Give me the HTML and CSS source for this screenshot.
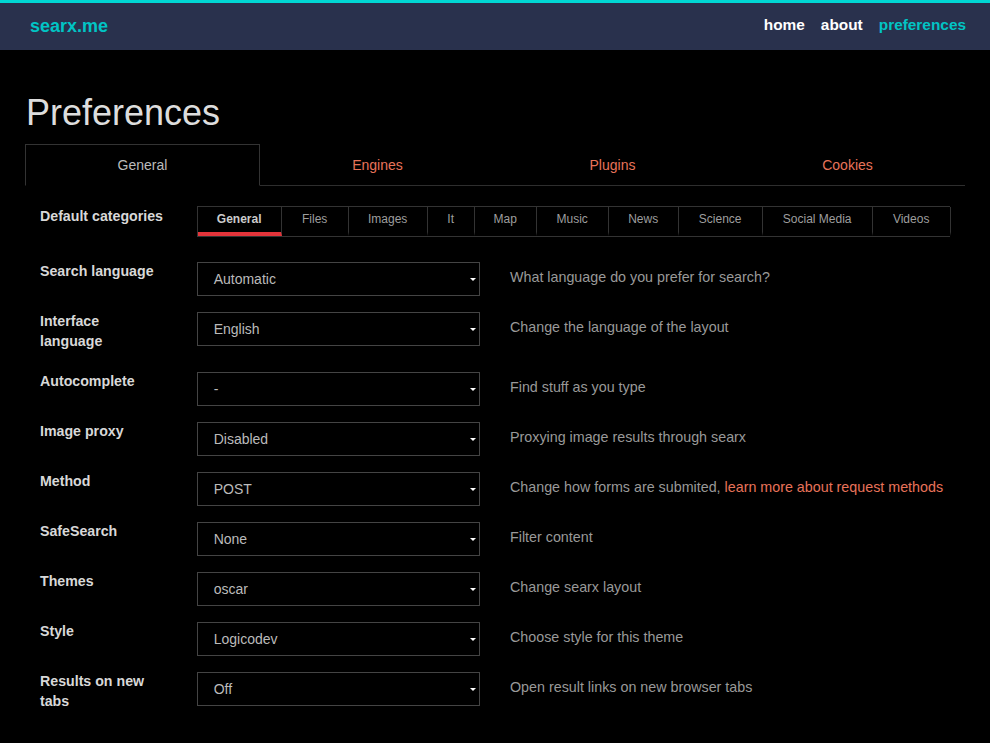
FILE: index.html
```html
<!DOCTYPE html>
<html lang="en">
<head>
<meta charset="utf-8">
<title>searx.me - preferences</title>
<link rel="stylesheet" href="styles.css">
</head>
<body>
<header class="navbar">
  <a class="brand" href="#">searx.me</a>
  <nav class="nav-links">
    <a href="#">home</a>
    <a href="#">about</a>
    <a class="current" href="#">preferences</a>
  </nav>
</header>

<main class="container">
  <h1 class="title">Preferences</h1>

  <ul class="tabs">
    <li class="tab active">General</li>
    <li class="tab">Engines</li>
    <li class="tab">Plugins</li>
    <li class="tab">Cookies</li>
  </ul>

  <div class="form">
    <div class="row row-cats">
      <div class="label">Default categories</div>
      <div class="cats">
        <span class="cat on">General</span>
        <span class="cat">Files</span>
        <span class="cat">Images</span>
        <span class="cat">It</span>
        <span class="cat">Map</span>
        <span class="cat">Music</span>
        <span class="cat">News</span>
        <span class="cat">Science</span>
        <span class="cat">Social Media</span>
        <span class="cat">Videos</span>
      </div>
    </div>

    <div class="row">
      <div class="label">Search language</div>
      <div class="select">Automatic<span class="caret"></span></div>
      <div class="help">What language do you prefer for search?</div>
    </div>

    <div class="row">
      <div class="label">Interface<br>language</div>
      <div class="select">English<span class="caret"></span></div>
      <div class="help">Change the language of the layout</div>
    </div>

    <div class="row">
      <div class="label">Autocomplete</div>
      <div class="select">-<span class="caret"></span></div>
      <div class="help">Find stuff as you type</div>
    </div>

    <div class="row">
      <div class="label">Image proxy</div>
      <div class="select">Disabled<span class="caret"></span></div>
      <div class="help">Proxying image results through searx</div>
    </div>

    <div class="row">
      <div class="label">Method</div>
      <div class="select">POST<span class="caret"></span></div>
      <div class="help">Change how forms are submited, <a href="#">learn more about request methods</a></div>
    </div>

    <div class="row">
      <div class="label">SafeSearch</div>
      <div class="select">None<span class="caret"></span></div>
      <div class="help">Filter content</div>
    </div>

    <div class="row">
      <div class="label">Themes</div>
      <div class="select">oscar<span class="caret"></span></div>
      <div class="help">Change searx layout</div>
    </div>

    <div class="row">
      <div class="label">Style</div>
      <div class="select">Logicodev<span class="caret"></span></div>
      <div class="help">Choose style for this theme</div>
    </div>

    <div class="row">
      <div class="label">Results on new<br>tabs</div>
      <div class="select">Off<span class="caret"></span></div>
      <div class="help">Open result links on new browser tabs</div>
    </div>
  </div>
</main>
</body>
</html>
```

FILE: styles.css
```css
* { box-sizing: border-box; }

html, body {
  margin: 0;
  padding: 0;
  background: #000;
  font-family: "Liberation Sans", Arial, sans-serif;
  font-size: 14px;
  line-height: 20px;
  color: #bbb;
}

a { text-decoration: none; }

.navbar {
  height: 50px;
  border-top: 3px solid #01d7d4;
  background: #29314d;
  display: flex;
  align-items: center;
  justify-content: space-between;
  padding: 0 24px 0 30px;
}

.brand {
  color: #01c4c4;
  font-weight: bold;
  font-size: 18px;
  margin-top: -2px;
}

.nav-links {
  display: flex;
  gap: 16px;
  margin-top: -3px;
}

.nav-links a {
  color: #fff;
  font-weight: bold;
  font-size: 15.4px;
}

.nav-links a.current { color: #01c4c4; }

.container {
  width: 940px;
  margin: 0 auto;
}

.title {
  margin: 43px 0 11px 1px;
  font-size: 36px;
  line-height: 40px;
  font-weight: normal;
  color: #ddd;
}

.tabs {
  list-style: none;
  margin: 0;
  padding: 0;
  display: grid;
  grid-template-columns: repeat(4, 1fr);
  border-bottom: 1px solid #2e2e2e;
}

.tab {
  height: 42px;
  margin-bottom: -1px;
  padding: 10px 15px;
  text-align: center;
  color: #e8735a;
  border: 1px solid transparent;
}

.tab.active {
  color: #bbb;
  border-color: #333;
  border-bottom-color: #000;
}

.form {
  padding-top: 19px;
  display: flex;
  flex-direction: column;
  gap: 14px;
}

.row {
  display: grid;
  grid-template-columns: 156.67px 313.33px 1fr;
  align-items: start;
}

.label {
  padding: 1px 15px 0;
  margin-bottom: 5px;
  font-weight: bold;
  font-size: 14.2px;
  color: #d8d8d8;
}

.row-cats {
  grid-template-columns: 156.67px 1fr;
  margin-bottom: 9px;
}

.cats {
  margin: 1px 15px 0 15px;
  width: 753px;
  display: grid;
  grid-template-columns: 84px 67px 79px 47px 62px 72px 70px 84px 110px 78px;
  border: 1px solid #333;
  border-right: 0;
}

.cat {
  height: 29px;
  padding: 2px 0 0;
  text-align: center;
  font-size: 12px;
  line-height: 20px;
  color: #9e9e9e;
  border-right: 1px solid #333;
  border-bottom: 4px solid transparent;
}

.cat.on {
  color: #ccc;
  font-weight: bold;
  border-bottom-color: #e3343a;
}

.select {
  position: relative;
  margin: 2px 15px 0;
  height: 34px;
  padding: 6px 16px;
  border: 1px solid #444;
  background: #000;
  color: #bbb;
}

.caret {
  position: absolute;
  right: 3px;
  top: 15px;
  width: 0;
  height: 0;
  border-left: 3px solid transparent;
  border-right: 3px solid transparent;
  border-top: 3px solid #fff;
}

.help {
  padding: 7px 15px 0;
  font-size: 14.3px;
  color: #999;
}

.help a { color: #e8735a; }
```
